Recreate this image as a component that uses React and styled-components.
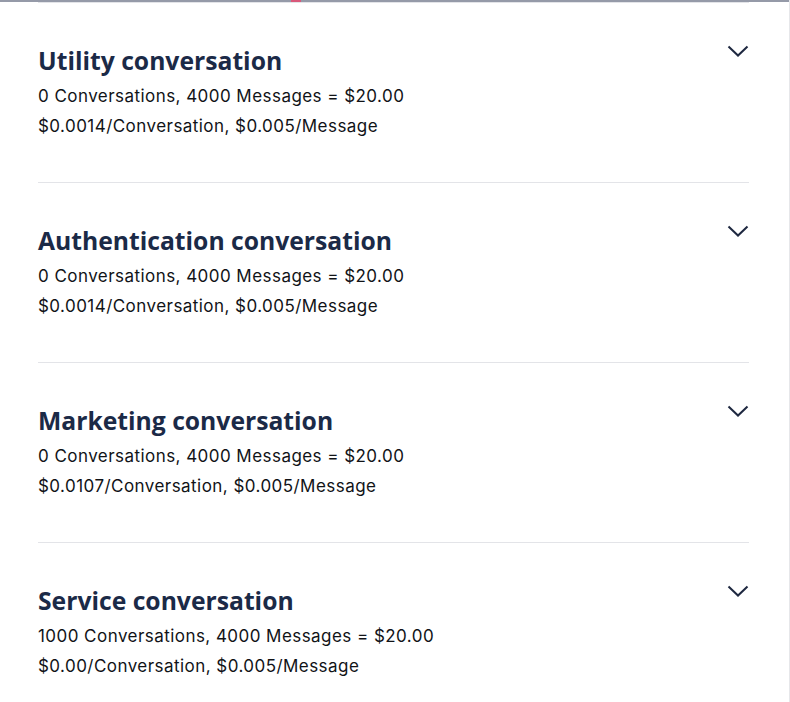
import React from 'react';
import styled, { createGlobalStyle } from 'styled-components';

const GlobalStyle = createGlobalStyle`
  html, body {
    margin: 0;
    padding: 0;
    background: #ffffff;
  }
  body {
    font-family: Inter, "Noto Sans", "Liberation Sans", sans-serif;
  }
`;

const plans = [
  {
    title: 'Utility conversation',
    total: '0 Conversations, 4000 Messages = $20.00',
    rate: '$0.0014/Conversation, $0.005/Message',
  },
  {
    title: 'Authentication conversation',
    total: '0 Conversations, 4000 Messages = $20.00',
    rate: '$0.0014/Conversation, $0.005/Message',
  },
  {
    title: 'Marketing conversation',
    total: '0 Conversations, 4000 Messages = $20.00',
    rate: '$0.0107/Conversation, $0.005/Message',
  },
  {
    title: 'Service conversation',
    total: '1000 Conversations, 4000 Messages = $20.00',
    rate: '$0.00/Conversation, $0.005/Message',
  },
];

export default function App() {
  return (
    <Page>
      <GlobalStyle />
      <TopBar>
        <Marker />
      </TopBar>
      <List>
        {plans.map((p) => (
          <Section key={p.title}>
            <Header>
              <Title>{p.title}</Title>
              <Chevron viewBox="0 0 22 12" aria-hidden="true">
                <path d="M1.5 1.5 L11 10.5 L20.5 1.5" />
              </Chevron>
            </Header>
            <Line>{p.total}</Line>
            <Line>{p.rate}</Line>
          </Section>
        ))}
      </List>
    </Page>
  );
}

const Page = styled.div`
  min-height: 702px;
  border-right: 1px solid #e6e7ea;
  box-sizing: border-box;
`;

const TopBar = styled.div`
  position: relative;
  height: 2px;
  background: #959aa8;
`;

const Marker = styled.span`
  position: absolute;
  left: 291px;
  top: 0;
  width: 10px;
  height: 2px;
  background: #d9587a;
`;

const List = styled.div`
  padding: 0 40px 0 38px;
`;

const Section = styled.section`
  border-top: 1px solid #e3e4e8;
  padding: 42px 0 40px;
  height: 180px;
  box-sizing: border-box;
`;

const Header = styled.div`
  display: flex;
  justify-content: space-between;
  align-items: flex-start;
`;

const Title = styled.h2`
  margin: 0 0 4px;
  font-family: "Open Sans", "Noto Sans", sans-serif;
  font-size: 24.7px;
  line-height: 32px;
  font-weight: 700;
  color: #1b2a47;
`;

const Chevron = styled.svg`
  width: 22px;
  height: 12px;
  fill: none;
  stroke: #1e2840;
  stroke-width: 2;
`;

const Line = styled.p`
  margin: 0;
  font-size: 17px;
  letter-spacing: 0.45px;
  line-height: 30px;
  color: #111317;
`;
